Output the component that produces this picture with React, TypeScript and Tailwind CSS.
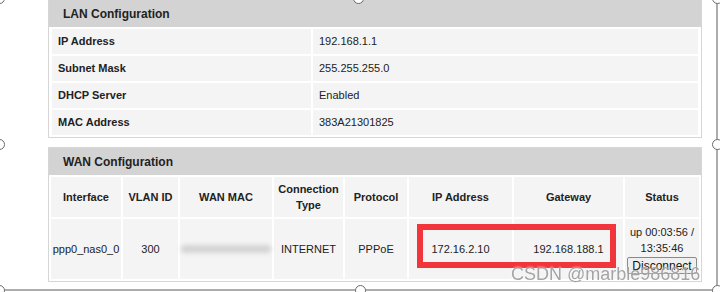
import React from "react";

const lanRows: [string, string][] = [
  ["IP Address", "192.168.1.1"],
  ["Subnet Mask", "255.255.255.0"],
  ["DHCP Server", "Enabled"],
  ["MAC Address", "383A21301825"],
];

const wanHeaders = ["Interface", "VLAN ID", "WAN MAC", "Connection Type", "Protocol", "IP Address", "Gateway", "Status"];

function Cell({ children, className = "" }: { children?: React.ReactNode; className?: string }) {
  return (
    <div className={`bg-[#f4f4f4] flex items-center justify-center text-center text-[11px] leading-[16px] text-[#222] ${className}`}>
      {children}
    </div>
  );
}

function Overlay() {
  const handles: [number, number][] = [
    [-1, -2], [358, -2], [717, -2],
    [-1, 144], [717, 144],
    [-1, 290], [360, 290], [717, 290],
  ];
  return (
    <svg className="absolute left-0 top-0 pointer-events-none" width="720" height="292" viewBox="0 0 720 292">
      <rect x="-1" y="-2" width="718" height="292" fill="none" stroke="#5a5a5a" strokeWidth="1" />
      {handles.map(([cx, cy], i) => (
        <circle key={i} cx={cx + 0.5} cy={cy + 0.5} r="5" fill="#ffffff" stroke="#6a6a6a" strokeWidth="1" />
      ))}
    </svg>
  );
}

export default function App() {
  return (
    <div className="relative w-[720px] h-[292px] overflow-hidden bg-white font-['Liberation_Sans',Arial,sans-serif]">
      <div className="pl-[48px] flex flex-col">
        {/* LAN */}
        <div className="w-[654px] border border-t-0 border-[#d6d6d6] bg-white">
          <div className="h-[27px] bg-[#d3d3d4] pl-[14px] flex items-center text-[12px] font-bold text-[#222]">
            LAN Configuration
          </div>
          <div className="flex flex-col gap-[2px] px-[3px] py-[2px]">
            {lanRows.map(([k, v]) => (
              <div key={k} className="flex gap-[2px] h-[25px]">
                <div className="w-[259px] bg-[#f4f4f4] pl-[6px] flex items-center text-[11px] font-bold text-[#222]">{k}</div>
                <div className="flex-1 bg-[#f4f4f4] pl-[6px] flex items-center text-[11px] text-[#222]">{v}</div>
              </div>
            ))}
          </div>
        </div>

        {/* WAN */}
        <div className="mt-[9px] w-[654px] border border-[#d6d6d6] bg-white">
          <div className="h-[27px] bg-[#d3d3d4] pl-[14px] flex items-center text-[12px] font-bold text-[#222]">
            WAN Configuration
          </div>
          <div className="grid grid-cols-[70px_55px_92px_69px_62px_103px_109px_74px] grid-rows-[40px_60px] gap-[2px] px-[2px] py-[2px]">
            {wanHeaders.map((h) => (
              <Cell key={h} className="font-bold">
                {h === "Connection Type" ? (
                  <span>
                    Connection
                    <br />
                    Type
                  </span>
                ) : (
                  h
                )}
              </Cell>
            ))}
            <Cell>ppp0_nas0_0</Cell>
            <Cell>300</Cell>
            <Cell>
              <div className="w-[90px] h-[8px] rounded-full bg-[#d4d4d4] blur-[2px]" />
            </Cell>
            <Cell>INTERNET</Cell>
            <Cell>PPPoE</Cell>
            <Cell>172.16.2.10</Cell>
            <Cell>192.168.188.1</Cell>
            <Cell className="flex-col">
              <span>up 00:03:56 /</span>
              <span>13:35:46</span>
              <button className="mt-[1px] h-[17px] px-[4px] border border-[#8a8a8a] rounded-[2px] bg-[#efefef] text-[12px] leading-[14px] text-[#111]">
                Disconnect
              </button>
            </Cell>
          </div>
        </div>
      </div>

      {/* red highlight box */}
      <div className="absolute left-[417px] top-[224px] w-[199px] h-[44px] border-[6px] border-[#f2353b] pointer-events-none" />

      {/* watermark */}
      <div className="absolute left-[511px] top-[263px] text-[18px] leading-[22px] text-[#9c9c9c] opacity-90 [text-shadow:0_0_2px_#ffffff] pointer-events-none whitespace-nowrap">
        CSDN @marble986816
      </div>

      <Overlay />
    </div>
  );
}
